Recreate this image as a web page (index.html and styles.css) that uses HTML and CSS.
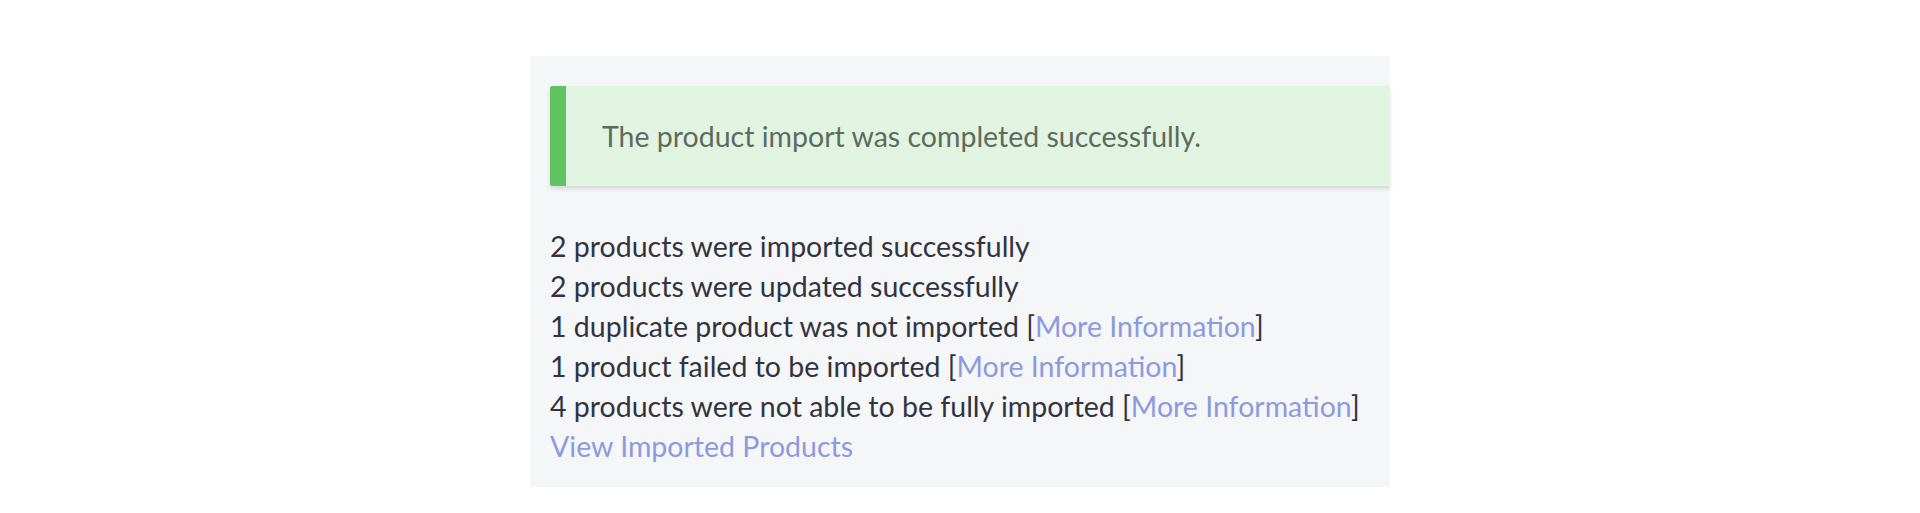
FILE: index.html
```html
<!DOCTYPE html>
<html lang="en">
<head>
    <meta charset="UTF-8">
    <title>Product Import</title>
    <link rel="stylesheet" href="styles.css">
</head>
<body>
    <div class="import-panel">
        <div class="alert-success">
            <p>The product import was completed successfully.</p>
        </div>
        <ul class="import-summary">
            <li>2 products were imported successfully</li>
            <li>2 products were updated successfully</li>
            <li>1 duplicate product was not imported [<a href="#">More Information</a>]</li>
            <li>1 product failed to be imported [<a href="#">More Information</a>]</li>
            <li>4 products were not able to be fully imported [<a href="#">More Information</a>]</li>
            <li><a href="#">View Imported Products</a></li>
        </ul>
    </div>
</body>
</html>
```

FILE: styles.css
```css
body {
    margin: 0;
    background: #ffffff;
    font-family: 'Lato', 'Liberation Sans', sans-serif;
}
.import-panel {
    width: 860px;
    height: 431px;
    box-sizing: border-box;
    margin: 56px 0 0 530px;
    padding: 30px 0 0 20px;
    background: #f5f6f8;
}
.alert-success {
    height: 100px;
    display: flex;
    align-items: center;
    background: #e1f4e1;
    border-left: 16px solid #60c461;
    border-radius: 2px 0 0 2px;
    box-shadow: 0 3px 4px rgba(0, 0, 0, 0.12);
    padding-left: 36px;
}
.alert-success p {
    margin: 0;
    font-size: 28.5px;
    color: #5d6b5f;
}
.import-summary {
    list-style: none;
    margin: 40px 0 0;
    padding: 0;
    font-size: 28.5px;
    line-height: 40px;
    color: #313440;
}
.import-summary a {
    color: #8d9ade;
    text-decoration: none;
}
```
